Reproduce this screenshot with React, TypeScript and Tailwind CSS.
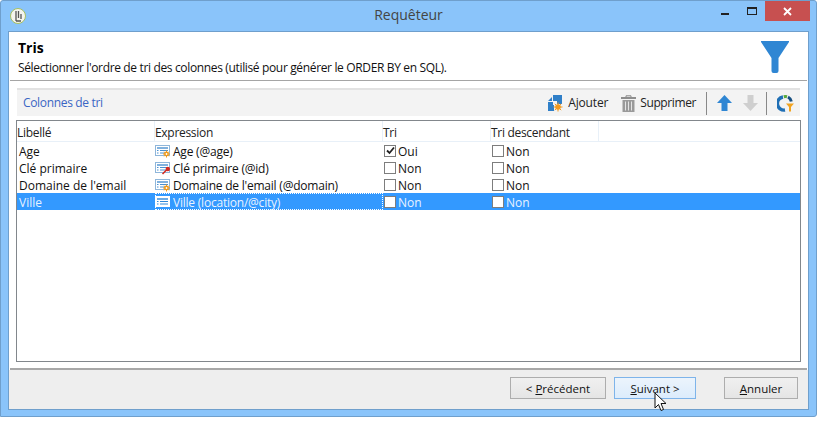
const FONT = "font-['Open_Sans','Noto_Sans',sans-serif]";

function AppIcon() {
  return (
    <svg width="16" height="16" viewBox="0 0 16 16">
      <circle cx="8" cy="8" r="7.5" fill="#f4f4ee" stroke="#a8c060" />
      <path d="M6 3v10M8.5 3v7M11 6v5M6 13h5" stroke="#555" strokeWidth="1.3" fill="none" />
    </svg>
  );
}

function FilterBig() {
  return (
    <svg width="28" height="32" viewBox="0 0 28 32">
      <path d="M0 0H28V1L17.5 17V30Q17.5 32 15.5 32H12.5Q10.5 32 10.5 30V17L0 1Z" fill="#2f86d3" />
    </svg>
  );
}

function AddIcon() {
  return (
    <svg width="15" height="17" viewBox="0 0 15 17">
      <path d="M0 6 4 2V6ZM5 0H14V9H9V6H5Z" fill="#2f7fc8" />
      <path d="M0 7H5V10H6V16H0Z" fill="#2f7fc8" />
      <circle cx="10" cy="12" r="2.8" fill="#f29a1f" />
      <path d="M10 7.5v9M5.5 12h9M6.8 8.8l6.4 6.4M13.2 8.8l-6.4 6.4" stroke="#f29a1f" strokeWidth="1" />
    </svg>
  );
}

function TrashIcon() {
  return (
    <svg width="15" height="17" viewBox="0 0 15 17">
      <path d="M5 2V.8H10V2" fill="none" stroke="#888" />
      <rect x="0" y="2" width="15" height="2" fill="#8d8d8d" />
      <path d="M1.5 5H13.5V17H1.5Z" fill="#9a9a9a" />
      <path d="M4.5 6.5V15.5M7.5 6.5V15.5M10.5 6.5V15.5" stroke="#e4e4e4" strokeWidth="1" />
    </svg>
  );
}

function ArrowIcon({ down, color }: { down?: boolean; color: string }) {
  return (
    <svg width="15" height="16" viewBox="0 0 15 16" className={down ? "rotate-180" : ""}>
      <path d="M7.5 0 15 8H10.5V16H4.5V8H0Z" fill={color} />
    </svg>
  );
}

function ChartIcon() {
  return (
    <svg width="17" height="17" viewBox="0 0 17 17">
      <path d="M6 2A6.5 6.5 0 0 0 8 15" fill="none" stroke="#1f6fb5" strokeWidth="3.4" />
      <path d="M6.8 1.8A6.5 6.5 0 0 1 10 1.8" fill="none" stroke="#58a83c" strokeWidth="3" />
      <path d="M11 2A6.5 6.5 0 0 1 14.3 6.5" fill="none" stroke="#174f80" strokeWidth="3" />
      <path d="M9 8.5H17L14 12V16.5H12V12Z" fill="#f2a31f" />
    </svg>
  );
}

function FieldIcon({ badge, selected }: { badge?: "gear" | "key"; selected?: boolean }) {
  const line = selected ? "#2f87d8" : "#4a90d0";
  return (
    <svg width="16" height="14" viewBox="0 0 16 14" className="shrink-0">
      <rect x="0.5" y="1.5" width="14" height="10" fill="#fff" stroke={selected ? "#fff" : "#8fb6da"} />
      {selected && <rect x="0" y="1" width="15" height="11" fill="#fff" />}
      <path d="M2 4H13" stroke={line} strokeWidth="1.4" />
      <path d="M2 6.5H3.5M5 6.5H13M2 9H3.5M5 9H13" stroke={line} />
      {badge === "gear" && (
        <g>
          <circle cx="11.5" cy="10" r="2.4" fill="#f09a1a" />
          <path d="M11.5 6.5v7M8 10h7M9.2 7.7l4.6 4.6M13.8 7.7l-4.6 4.6" stroke="#f09a1a" />
          <circle cx="11.5" cy="10" r="0.9" fill="#fff" />
        </g>
      )}
      {badge === "key" && (
        <g>
          <path d="M7.5 13 12 8.5" stroke="#d42a20" strokeWidth="1.6" />
          <circle cx="12.8" cy="8" r="2.2" fill="#d42a20" />
        </g>
      )}
    </svg>
  );
}

function Check({ checked }: { checked?: boolean }) {
  return (
    <span className="flex h-[12px] w-[12px] shrink-0 items-center justify-center border border-[#7d7d7d] bg-white">
      {checked && (
        <svg width="9" height="9" viewBox="0 0 9 9">
          <path d="M1 4.5 3.5 7 8 1.5" fill="none" stroke="#222" strokeWidth="1.8" />
        </svg>
      )}
    </span>
  );
}

function HeadCell({ label, className }: { label: string; className: string }) {
  return <div className={`h-full border-r border-[#e8f0f8] pt-[2px] leading-[19px] tracking-[-0.3px] ${className}`}>{label}</div>;
}

function RowText({ children, className }: { children: React.ReactNode; className?: string }) {
  return <span className={`h-[17px] whitespace-nowrap pt-[2px] leading-[15px] ${className ?? ""}`}>{children}</span>;
}

function Row({ name, expr, badge, tri, checked, selected }: { name: string; expr: string; badge?: "gear" | "key"; tri: string; checked?: boolean; selected?: boolean }) {
  return (
    <div className={`flex h-[17px] items-center ${selected ? "bg-[#3399ff] text-[#e9f3ff]" : "text-[#111]"}`}>
      <div className="flex w-[138px] items-center pl-[2px]">
        <RowText>{name}</RowText>
      </div>
      <div className={`flex h-full w-[228px] items-center gap-[2px] ${selected ? "outline-1 -outline-offset-1 outline-dotted outline-white" : ""}`}>
        <FieldIcon badge={badge} selected={selected} />
        <RowText className="tracking-[-0.22px]">{expr}</RowText>
      </div>
      <div className="flex w-[108px] items-center gap-[2px] pl-[1px]">
        <Check checked={checked} />
        <RowText>{tri}</RowText>
      </div>
      <div className="flex w-[108px] items-center gap-[2px] pl-[1px]">
        <Check />
        <RowText>Non</RowText>
      </div>
    </div>
  );
}

function Btn({ children, className }: { children: React.ReactNode; className: string }) {
  return (
    <button type="button" className={`flex h-[22px] items-center justify-center border pt-[2px] text-[11.5px] leading-[16px] text-[#111] ${className}`}>
      {children}
    </button>
  );
}

export default function App() {
  return (
    <div className={`h-[436px] w-[822px] bg-white text-[12px] ${FONT}`}>
      <div className="relative flex h-[417px] w-[817px] flex-col rounded-t-[3px] rounded-br-[3px] border border-[#6f9fcc] bg-[#8ac4fa] pb-[6px]">
        {/* barre de titre */}
        <div className="grid h-[30px] shrink-0 grid-cols-[1fr_auto_1fr]">
          <div className="pl-[9px] pt-[7px]">
            <AppIcon />
          </div>
          <div className="pt-[4px] text-[14px] leading-[20px] text-[#444]">Requêteur</div>
          <div className="flex items-start justify-end pr-[6px]">
            <div className="mt-[12px] h-[2px] w-[8px] bg-[#222]" />
            <div className="ml-[18px] mt-[6px] h-[8px] w-[10px] border border-t-2 border-[#222]" />
            <div className="ml-[8px] flex h-[20px] w-[45px] items-center justify-center bg-[#c75050]">
              <svg width="9" height="9" viewBox="0 0 9 9">
                <path d="M1 1 8 8M8 1 1 8" stroke="#fff" strokeWidth="1.8" />
              </svg>
            </div>
          </div>
        </div>

        <div className="mx-[7px] flex min-h-0 flex-1 flex-col border border-[#6f9fcc] bg-white">
          {/* en-tête */}
          <div className="mx-[1px] flex h-[49px] shrink-0 justify-between border-b border-[#a5a5a5] pl-[8px] pr-[18px]">
            <div>
              <div className="pt-[6px] text-[14px] font-bold leading-[19px] text-black">Tris</div>
              <div className="pt-[3px] leading-[16px] tracking-[-0.35px] text-[#111]">Sélectionner l'ordre de tri des colonnes (utilisé pour générer le ORDER BY en SQL).</div>
            </div>
            <div className="pt-[9px]">
              <FilterBig />
            </div>
          </div>

          {/* contenu */}
          <div className="flex min-h-0 flex-1 flex-col px-[7px] pt-[7px]">
            <div className="mx-px flex h-[28px] shrink-0 items-center justify-between border-t-2 border-[#e2e2e2] bg-[#f3f3f3] pl-[6px] pr-[6px]">
              <span className="tracking-[-0.33px] text-[#3a66c4]">Colonnes de tri</span>
              <div className="flex items-center">
                <AddIcon />
                <span className="ml-[5px] tracking-[-0.15px] text-[#222]">Ajouter</span>
                <span className="ml-[13px]"><TrashIcon /></span>
                <span className="ml-[4px] tracking-[-0.4px] text-[#222]">Supprimer</span>
                <div className="ml-[10px] h-[23px] w-px bg-[#888]" />
                <span className="ml-[10px]"><ArrowIcon color="#2f86d3" /></span>
                <span className="ml-[11px]"><ArrowIcon down color="#cfcfcf" /></span>
                <div className="ml-[8px] h-[23px] w-px bg-[#888]" />
                <span className="ml-[10px]"><ChartIcon /></span>
              </div>
            </div>

            <div className="mt-[4px] flex min-h-0 flex-1 flex-col border border-[#82878c] bg-white">
              <div className="flex h-[21px] shrink-0 items-center border-b border-[#e8f0f8] text-[#222]">
                <HeadCell label="Libellé" className="w-[138px]" />
                <HeadCell label="Expression" className="w-[228px]" />
                <HeadCell label="Tri" className="w-[108px]" />
                <HeadCell label="Tri descendant" className="w-[108px]" />
              </div>
              <Row name="Age" expr="Age (@age)" badge="gear" tri="Oui" checked />
              <Row name="Clé primaire" expr="Clé primaire (@id)" badge="key" tri="Non" />
              <Row name="Domaine de l'email" expr="Domaine de l'email (@domain)" badge="gear" tri="Non" />
              <Row name="Ville" expr="Ville (location/@city)" tri="Non" selected />
            </div>
          </div>

          {/* pied */}
          <div className="mx-[1px] mt-[6px] h-[2px] shrink-0 bg-[#a8a8a8]" />
          <div className="flex h-[39px] shrink-0 justify-end bg-[#eeeeee] pr-[10px] pt-[7px]">
            <Btn className="w-[96px] border-[#adadad] bg-gradient-to-b from-[#f0f0f0] to-[#e5e5e5]">
              &lt;&nbsp;<span className="underline">P</span>récédent
            </Btn>
            <Btn className="ml-[8px] w-[82px] border-[#7eb4ea] bg-gradient-to-b from-[#ecf4fc] to-[#dcecfc]">
              <span className="underline">S</span>uivant &gt;
            </Btn>
            <Btn className="ml-[28px] w-[74px] border-[#adadad] bg-gradient-to-b from-[#f0f0f0] to-[#e5e5e5]">
              <span className="underline">A</span>nnuler
            </Btn>
          </div>
        </div>

        {/* curseur */}
        <svg width="13" height="20" viewBox="0 0 13 20" className="absolute left-[653px] top-[391px]">
          <path d="M1 1V16L4.5 12.5 7 18.5 9.5 17.5 7 11.5H12Z" fill="#fff" stroke="#111" strokeWidth="1" />
        </svg>
      </div>
    </div>
  );
}
